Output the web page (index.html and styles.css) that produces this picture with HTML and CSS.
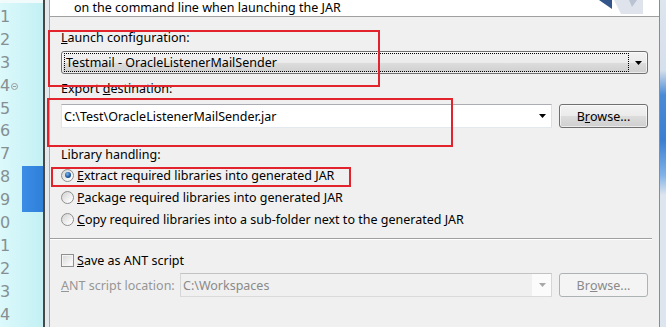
FILE: index.html
```html
<!DOCTYPE html>
<html lang="en">
<head>
  <meta charset="UTF-8">
  <title>Runnable JAR File Export</title>
  <link rel="stylesheet" href="styles.css">
</head>
<body>
  <div class="screen">
    <div class="gutter">
      <div class="ln"><span class="num">1</span><span class="fold"></span><span class="sel"></span></div>
      <div class="ln"><span class="num">2</span><span class="fold"></span><span class="sel"></span></div>
      <div class="ln"><span class="num">3</span><span class="fold"></span><span class="sel"></span></div>
      <div class="ln"><span class="num">4</span><span class="fold"><svg width="7" height="7" viewBox="0 0 7 7"><circle cx="3.5" cy="3.5" r="3" fill="none" stroke="#9a9a9a"/><path d="M1.8 3.5h3.4" stroke="#9a9a9a"/></svg></span><span class="sel"></span></div>
      <div class="ln"><span class="num">5</span><span class="fold"></span><span class="sel"></span></div>
      <div class="ln"><span class="num">6</span><span class="fold"></span><span class="sel"></span></div>
      <div class="ln"><span class="num">7</span><span class="fold"></span><span class="sel"></span></div>
      <div class="ln on"><span class="num">8</span><span class="fold"></span><span class="sel"></span></div>
      <div class="ln on"><span class="num">9</span><span class="fold"></span><span class="sel"></span></div>
      <div class="ln"><span class="num">0</span><span class="fold"></span><span class="sel"></span></div>
      <div class="ln"><span class="num">1</span><span class="fold"></span><span class="sel"></span></div>
      <div class="ln"><span class="num">2</span><span class="fold"></span><span class="sel"></span></div>
      <div class="ln"><span class="num">3</span><span class="fold"></span><span class="sel"></span></div>
      <div class="ln"><span class="num">4</span><span class="fold"></span><span class="sel"></span></div>
    </div>
    <div class="frame-left"></div>

    <div class="dialog">
      <div class="banner">
        <span>on the command line when launching the JAR</span>
        <svg class="banner-img" width="46" height="16" viewBox="0 0 46 16">
          <polygon points="0,0 13,0 13,9" fill="#34558a"/>
          <polygon points="15,0 44,0 44,14 22,14" fill="#dfe4ec"/>
          <polygon points="30,0 38,0 33,7" fill="#b9c3d2"/>
        </svg>
      </div>

      <div class="content">
        <div class="label"><u>L</u>aunch configuration:</div>
        <div class="combo">
          <div class="focus">Testmail - OracleListenerMailSender</div>
          <div class="arrow-cell"><svg width="7" height="4" viewBox="0 0 7 4"><polygon points="0,0 7,0 3.5,4" fill="#000"/></svg></div>
        </div>

        <div class="label gap-export">Export <u>d</u>estination:</div>
        <div class="row">
          <div class="field">
            <span class="field-text">C:\Test\OracleListenerMailSender.jar</span>
            <div class="arrow-cell"><svg width="7" height="4" viewBox="0 0 7 4"><polygon points="0,0 7,0 3.5,4" fill="#000"/></svg></div>
          </div>
          <div class="btn">B<u>r</u>owse...</div>
        </div>

        <div class="label gap-library">Library handling:</div>
        <div class="options">
          <div class="option"><span class="radio on"><span class="dot"></span></span><span><u>E</u>xtract required libraries into generated JAR</span></div>
          <div class="option"><span class="radio"></span><span><u>P</u>ackage required libraries into generated JAR</span></div>
          <div class="option"><span class="radio"></span><span><u>C</u>opy required libraries into a sub-folder next to the generated JAR</span></div>
        </div>

        <div class="separator"></div>

        <div class="option check-row"><span class="checkbox"></span><span><u>S</u>ave as ANT script</span></div>

        <div class="row ant-row">
          <div class="label disabled ant-label"><u>A</u>NT script location:</div>
          <div class="field field-off">
            <span class="field-text">C:\Workspaces</span>
            <div class="arrow-cell"><svg width="7" height="4" viewBox="0 0 7 4"><polygon points="0,0 7,0 3.5,4" fill="#a8a8a8"/></svg></div>
          </div>
          <div class="btn btn-off">Br<u>o</u>wse...</div>
        </div>
      </div>
    </div>
    <div class="frame-right"></div>
  </div>

  <!-- red annotation boxes drawn over the dialog -->
  <div class="note note-launch"></div>
  <div class="note note-export"></div>
  <div class="note note-extract"></div>
</body>
</html>
```

FILE: styles.css
```css
* { box-sizing: border-box; }
body {
  margin: 0;
  width: 666px; height: 327px;
  overflow: hidden;
  position: relative;
  font-family: 'Noto Sans', 'DejaVu Sans', sans-serif;
  font-size: 12.5px;
  color: #000;
}
.screen {
  display: flex;
  height: 327px;
}

/* editor gutter on the left */
.gutter {
  width: 43px;
  flex: none;
  padding-top: 3px;
  border-top: 3px solid #f2fbfc;
  background: linear-gradient(90deg, #dcf9fb, #c3f0f4);
}
.ln {
  display: flex;
  height: 22.9px;
  line-height: 22.9px;
}
.ln .num {
  width: 9px;
  text-align: right;
  font-family: 'DejaVu Sans', sans-serif;
  font-size: 16px;
  color: #878f92;
}
.ln .fold {
  width: 13px;
  display: flex;
  align-items: center;
  padding-left: 2px;
}
.ln .sel { flex: 1; }
.ln.on .sel { background: linear-gradient(90deg, #3b8de6, #2f7fd8); }

.frame-left {
  width: 7px;
  flex: none;
  border-left: 2px solid #474747;
  border-right: 1px solid #a8a8a8;
  background: #e4e9ee;
}
.frame-right {
  width: 7px;
  flex: none;
  border-left: 1px solid #8c8c8c;
  background: linear-gradient(180deg, #dde5ee 0, #d6e0ec 70px, #4a8bd6 95px, #3a7fd2 140px, #7fb2e8 175px, #dde5ee 195px, #dde5ee 100%);
}

/* dialog */
.dialog {
  flex: 1;
  background: #f0f0f0;
  display: flex;
  flex-direction: column;
}
.banner {
  height: 17px;
  flex: none;
  background: #fff;
  border-bottom: 1px solid #a0a0a0;
  display: flex;
  align-items: center;
  padding-left: 24px;
  line-height: 16px;
}
.banner-img {
  margin-left: auto;
  margin-right: 14px;
  align-self: flex-start;
}
.content {
  padding: 13px 11px 0 11px;
  display: flex;
  flex-direction: column;
}
.label {
  height: 15px;
  line-height: 15px;
  white-space: nowrap;
}
.gap-export { margin-top: 7px; }
.gap-library { margin-top: 19px; }
.disabled { color: #969696; }

.combo {
  margin-top: 6px;
  height: 23px;
  border: 1px solid #707070;
  border-radius: 3px;
  background: linear-gradient(#f2f2f2, #ebebeb 50%, #dddddd 50%, #cfcfcf);
  box-shadow: inset 0 0 0 1px rgba(255,255,255,0.6);
  display: flex;
  align-items: center;
  padding: 1px 0 1px 1px;
}
.combo .focus {
  flex: 1;
  height: 19px;
  margin-left: 1px;
  border: 1px dotted #000;
  padding-left: 1px;
  line-height: 17px;
}
.arrow-cell {
  width: 18px;
  flex: none;
  display: flex;
  align-items: center;
  justify-content: center;
}
.arrow-cell svg { display: block; }

.row {
  margin-top: 8px;
  display: flex;
  gap: 7px;
  height: 24px;
}
.field {
  flex: 1;
  background: #fff;
  border: 1px solid;
  border-color: #abadb3 #dbdfe6 #e3e9ef #e2e3ea;
  display: flex;
  align-items: center;
  padding-left: 2px;
}
.field-text { flex: 1; white-space: nowrap; }
.btn {
  width: 89px;
  flex: none;
  border: 1px solid #707070;
  border-radius: 3px;
  background: linear-gradient(#f2f2f2, #ebebeb 50%, #dddddd 50%, #cfcfcf);
  box-shadow: inset 0 0 0 1px rgba(255,255,255,0.6);
  display: flex;
  align-items: center;
  justify-content: center;
}

.options {
  margin-top: 2px;
  display: flex;
  flex-direction: column;
}
.option {
  height: 22px;
  display: flex;
  align-items: center;
  gap: 3px;
  white-space: nowrap;
}
.radio {
  width: 13px; height: 13px;
  flex: none;
  border-radius: 50%;
  border: 1px solid #8e8f8f;
  background: linear-gradient(135deg, #d2d2d2, #f6f6f6 70%, #fff);
  display: flex;
  align-items: center;
  justify-content: center;
}
.radio .dot {
  width: 6px; height: 6px;
  border-radius: 50%;
  background: radial-gradient(circle at 40% 35%, #7ab8f0, #1f5ba2 55%, #0e2f5f);
}
.separator {
  margin: 8px -4px 0 -11px;
  height: 2px;
  border-top: 1px solid #a0a0a0;
  border-bottom: 1px solid #fff;
}
.check-row { margin-top: 9px; }
.checkbox {
  width: 13px; height: 13px;
  flex: none;
  border: 1px solid #8e8f8f;
  background: linear-gradient(135deg, #d6d6d6, #f4f4f4 70%, #fff);
  box-shadow: inset 0 0 0 1px #f4f4f4;
}
.ant-row { margin-top: 2px; }
.ant-label {
  width: 112px;
  flex: none;
  align-self: center;
}
.field-off {
  background: linear-gradient(90deg, #f0f0f0, #f0f0f0 calc(100% - 19px), #fbfbfb calc(100% - 19px));
  border-color: #c2c2c2 #d6d6d6 #dadada #d6d6d6;
  color: #8a8a8a;
}
.btn-off {
  border-color: #adb2b5;
  background: #f4f4f4;
  box-shadow: none;
  color: #8a8a8a;
}

/* annotation rectangles */
.note {
  position: absolute;
  border: 2px solid #e2232b;
}
.note-launch { left: 48px; top: 30px; width: 332px; height: 57px; }
.note-export { left: 47px; top: 98px; width: 406px; height: 49px; }
.note-extract { left: 51px; top: 167px; width: 300px; height: 20px; }
```
